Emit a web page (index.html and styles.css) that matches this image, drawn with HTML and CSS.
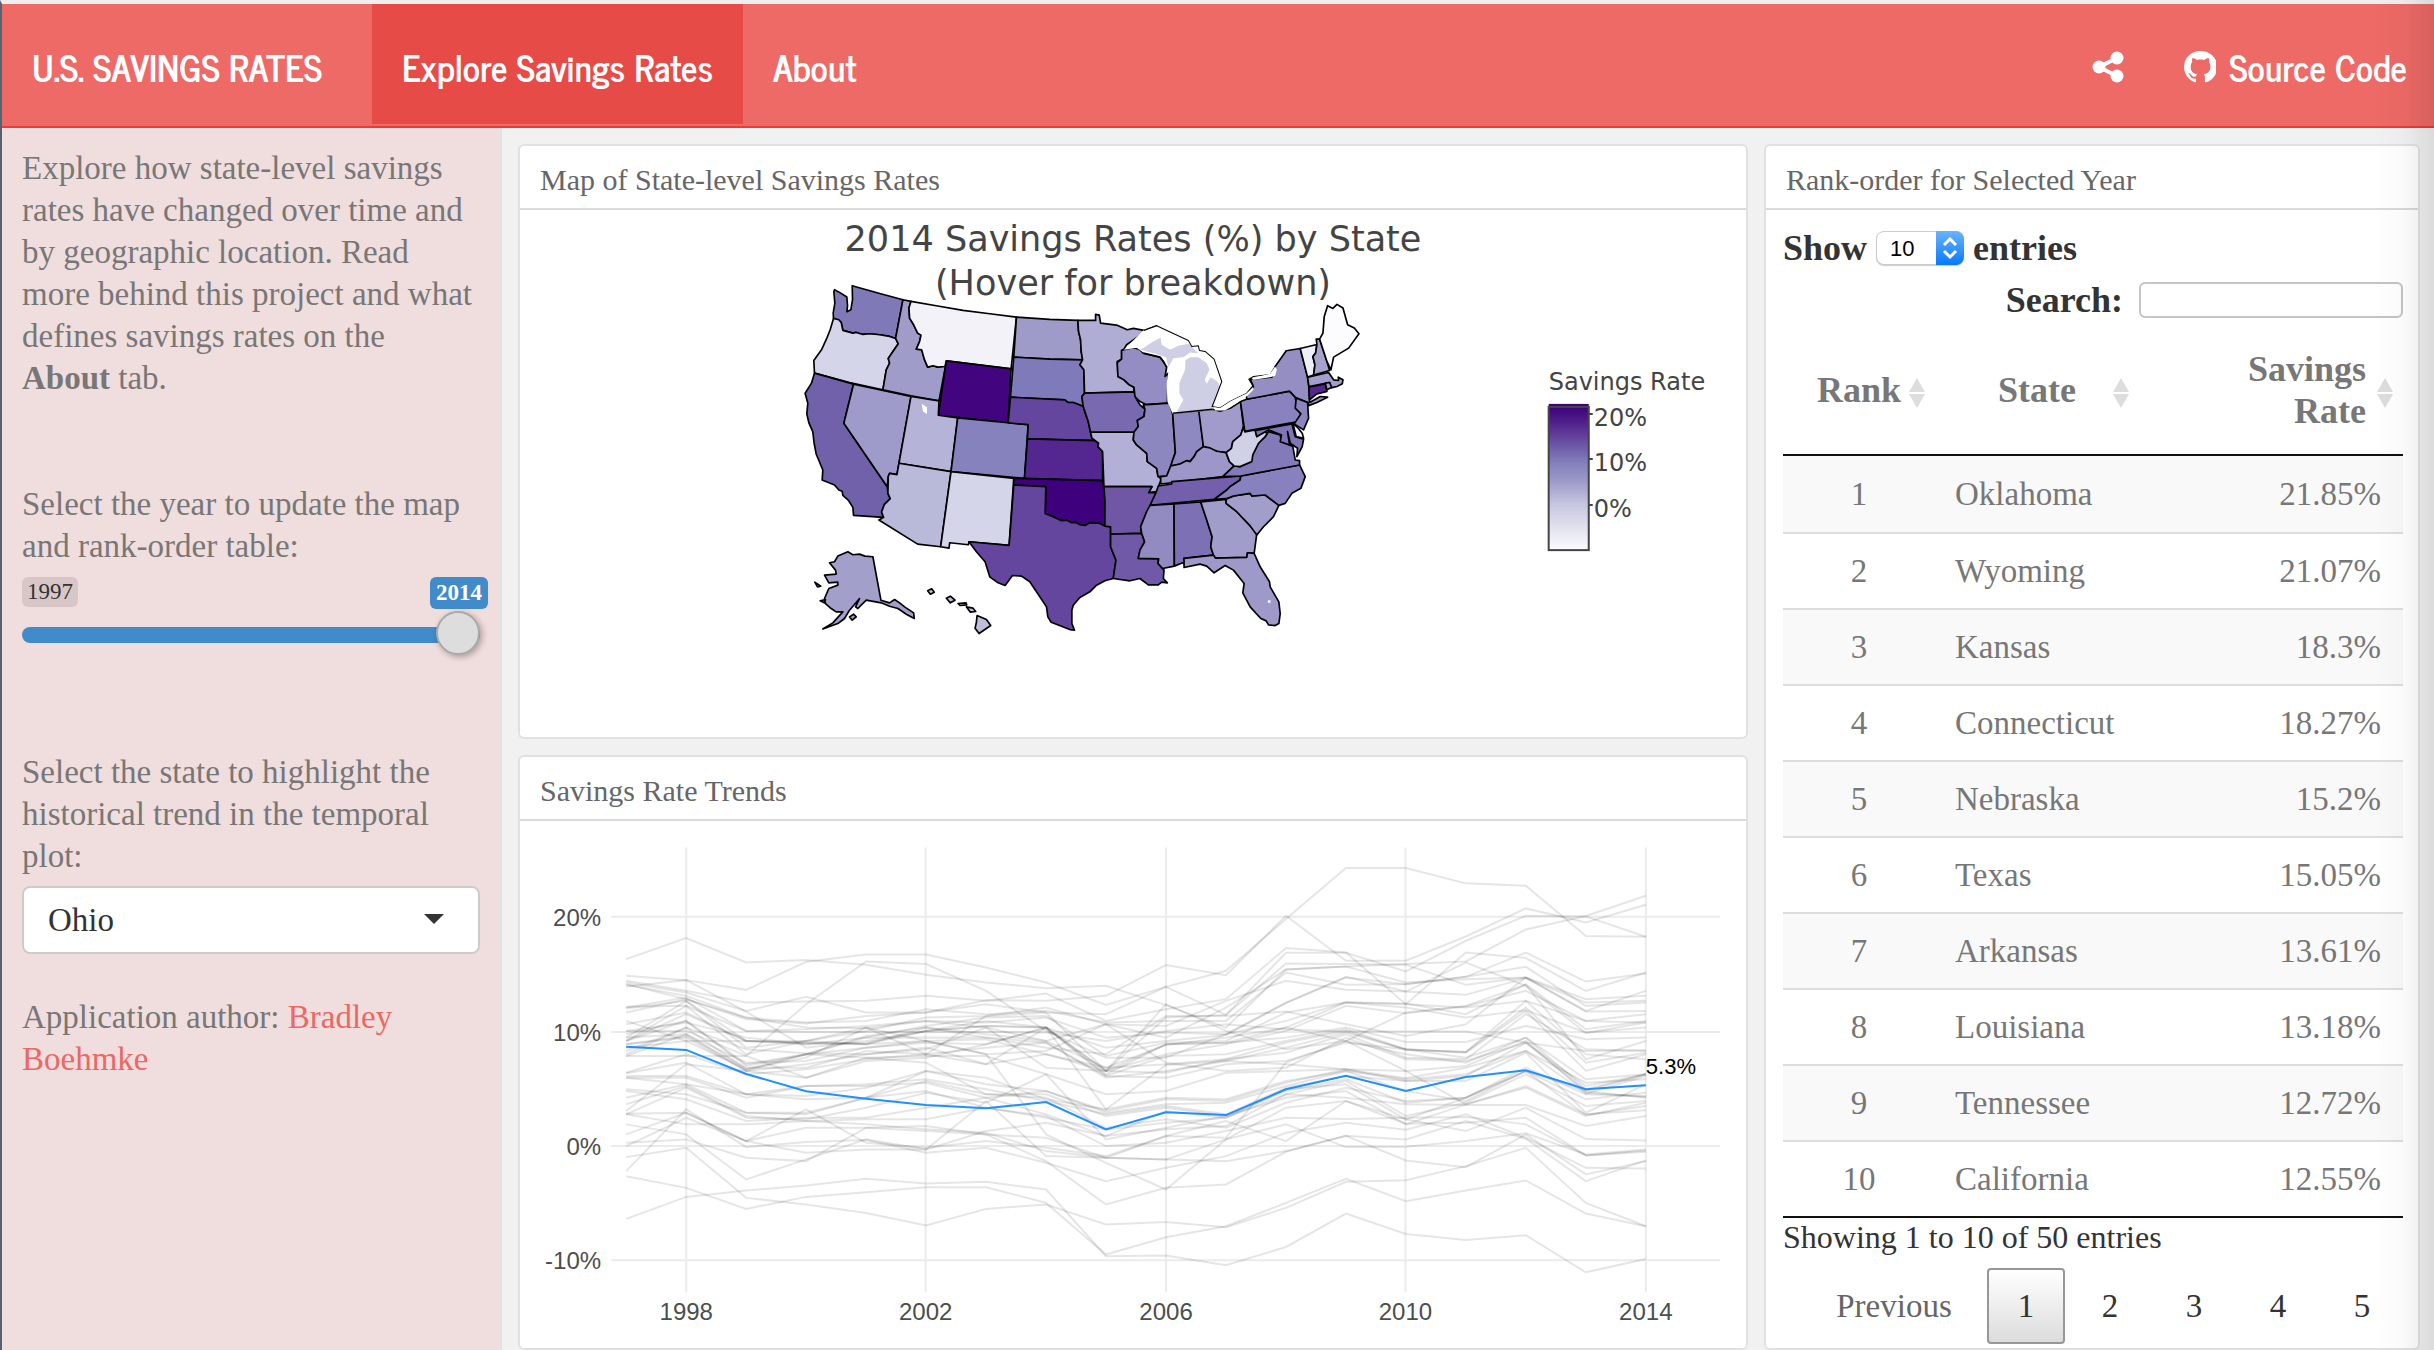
FILE: index.html
```html
<!DOCTYPE html>
<html lang="en">
<head>
<meta charset="utf-8">
<title>U.S. Savings Rates</title>
<link rel="stylesheet" href="styles.css">
</head>
<body>
<header class="navbar">
  <a class="brand" href="#">U.S. SAVINGS RATES</a>
  <nav class="tabs">
    <a class="tab active" href="#explore">Explore Savings Rates</a>
    <a class="tab" href="#about">About</a>
  </nav>
  <nav class="actions">
    <a class="action" href="#share" aria-label="Share">
      <svg class="icon" viewBox="0 0 32 32" aria-hidden="true"><path d="M25 7 7 16l18 9" fill="none" stroke="#fff" stroke-width="4"/><circle cx="25" cy="7" r="6.500"/><circle cx="7" cy="16" r="6.500"/><circle cx="25" cy="25" r="6.500"/></svg>
    </a>
    <a class="action" href="#source">
      <svg class="icon" viewBox="0 0 16 16" aria-hidden="true"><path d="M8 0C3.580 0 0 3.580 0 8c0 3.540 2.290 6.530 5.470 7.590.4.070.55-.17.55-.38v-1.490c-2.230.48-2.690-.94-2.690-.94-.36-.93-.89-1.170-.89-1.170-.73-.5.050-.49.050-.49.800.060 1.230.830 1.230.830.710 1.220 1.870.870 2.330.660.070-.51.280-.87.500-1.070-.8-.1-1.900-.4-2.500-1.200-.8-1-.9-2.900-.4-4 .1-.3.200-.5.500-.8-.2-.5-.2-1.400.1-2 .7-.1 1.700.5 2.200.9 1.200-.3 2.500-.3 3.700 0 .5-.4 1.500-1 2.200-.9.300.6.300 1.500.1 2 .9 1.100 1 2.700.4 4.100-.5 1.200-1.700 1.700-2.900 1.900.3.300.5.800.5 1.500v2.200c0 .21.150.46.550.38A8 8 0 0 0 8 0z"/></svg>
      <span>Source Code</span>
    </a>
  </nav>
</header>
<div class="dashboard">
  <aside class="sidebar">
    <p class="intro">Explore how state-level savings rates have changed over time and by geographic location. Read<br>more behind this project and what defines savings rates on the<br><strong>About</strong> tab.</p>
    <div class="field year">
      <label for="year">Select the year to update the map and rank-order table:</label>
      <div class="ticks"><span class="min">1997</span><output class="now" for="year">2014</output></div>
      <input id="year" class="slider" type="range" min="1997" max="2014" value="2014">
    </div>
    <div class="field">
      <label for="state">Select the state to highlight the historical trend in the temporal plot:</label>
      <div class="picker">
        <select id="state"><option>Ohio</option></select>
        <svg class="caret" viewBox="0 0 20 10" aria-hidden="true"><path d="M0 0h20L10 10z"/></svg>
      </div>
    </div>
    <p class="author">Application author: <a href="#author">Bradley Boehmke</a></p>
  </aside>
  <main class="main">
    <section class="card map-card">
      <h2>Map of State-level Savings Rates</h2>
      <svg class="plot" viewBox="521 211 1224 525" role="img" aria-label="2014 savings rates by state">
        <defs><linearGradient id="purples" x1="0" y1="0" x2="0" y2="1"><stop offset="0" stop-color="#3f007d"/><stop offset=".13" stop-color="#54278f"/><stop offset=".38" stop-color="#807dba"/><stop offset=".52" stop-color="#9e9ac8"/><stop offset=".68" stop-color="#c6c6e1"/><stop offset="1" stop-color="#fcfbfd"/></linearGradient></defs>
        <g class="map-title"><text x="1133" y="251">2014 Savings Rates (%) by State</text><text x="1133" y="295">(Hover for breakdown)</text></g>
        <g class="states" transform="translate(790 270) scale(.3333)">
          <path fill="#8079b8" d="M135 60L150 68 172 82 174 108 172 126 184 120 189 90 188 48 265 70 340 90 318 206 300 200 270 195 240 192 220 194 200 188 190 190 160 182 155 158 132 146 131 130 136 100 133 66z"/>
          <path fill="#d5d5e9" d="M132 146L148 150 155 158 160 182 190 190 200 188 220 194 240 192 270 195 300 200 318 206 326 222 308 248 296 266 300 280 290 300 280 360 180 338 75 310 73 272 96 240 112 205 122 180z"/>
          <path fill="#7161ab" d="M75 310L192 343 163 460 293 650 295 670 302 686 284 704 276 726 282 742 192 736 190 712 176 690 160 676 158 664 148 660 135 645 98 630 100 600 80 552 74 520 70 486 58 458 52 432 55 400 47 370 66 340z"/>
          <path fill="#9e9ac9" d="M192 343L280 362 364 380 328 580 322 614 300 610 296 620 293 650 163 460z"/>
          <path fill="#a09cca" d="M340 90L364 95 358 115 360 145 372 165 384 190 394 196 390 215 380 238 396 240 404 268 414 292 430 288 445 292 468 286 448 393 364 378 280 360 290 300 300 280 296 266 308 248 326 222 318 206z"/>
          <path fill="#f3f2f8" d="M364 95L440 108 520 122 600 132 680 142 664 297 470 273 466 290 445 292 430 288 414 292 404 268 396 240 380 238 390 215 394 196 384 190 372 165 360 145 358 115z"/>
          <path fill="#42057f" d="M470 273L664 297 655 459 446 436z"/>
          <path fill="#b5b3d7" d="M364 380L448 393 446 436 504 444 484 605 328 580z"/>
          <path fill="#8682bd" d="M504 444L715 464 704 625 484 605z"/>
          <path fill="#b9b9da" d="M328 580L484 605 453 830 384 822 268 750 282 742 276 726 284 704 302 686 295 670 296 620 300 610 322 614z"/>
          <path fill="#d5d5e9" d="M484 605L672 625 658 826 538 815 536 824 480 818 478 834 453 830z"/>
          <path fill="#9e9bc9" d="M680 142L780 149 864 152 866 185 872 210 874 245 878 270 780 268 672 262z"/>
          <path fill="#7f7aba" d="M672 262L780 268 878 270 870 285 882 300 884 370 876 380 880 410 866 404 850 398 835 398 825 390 662 382z"/>
          <path fill="#65469e" d="M662 382L825 390 835 398 850 398 866 404 880 410 886 430 895 455 902 487 906 505 915 512 713 507 715 464 655 459z"/>
          <path fill="#542790" d="M713 507L915 512 926 520 924 530 938 545 938 632 704 625z"/>
          <path fill="#3f007d" d="M672 625L938 632 945 690 945 768 930 760 900 758 885 766 870 764 858 757 845 758 830 750 815 752 790 740 766 730 768 650 672 645z"/>
          <path fill="#65469e" d="M672 645L768 650 766 730 790 740 815 752 830 750 845 758 858 757 870 764 885 766 900 758 930 760 945 768 962 770 962 792 962 830 978 870 970 925 945 932 920 945 900 965 870 982 850 1005 846 1020 846 1060 854 1080 840 1078 784 1056 774 1040 770 1010 740 965 720 935 695 918 668 916 646 946 625 938 600 920 586 875 560 845 538 815 658 826z"/>
          <path fill="#b0add5" d="M864 152L917 152 917 134 928 136 932 160 980 166 1012 180 1030 176 1062 182 1100 168 1060 190 1010 225 1002 238 995 242 995 268 982 275 984 320 1002 330 1018 345 1032 352 1032 366 884 370 882 300 870 285 878 270 874 245 872 210 866 185z"/>
          <path fill="#7869b0" d="M884 370L1032 366 1038 385 1050 405 1065 418 1062 440 1042 452 1045 470 1032 487 902 487 895 455 880 410 876 380z"/>
          <path fill="#b2b0d6" d="M902 487L1032 487 1030 510 1040 525 1070 550 1072 575 1100 595 1104 618 1114 628 1105 650 1100 665 1076 668 1086 650 942 650 938 545 924 530 926 520 906 505z"/>
          <path fill="#6f57a6" d="M942 650L1086 650 1076 668 1098 668 1085 705 1070 725 1052 770 1055 790 962 792 962 770 945 768 945 690z"/>
          <path fill="#7059a7" d="M962 792L1055 790 1064 815 1050 840 1045 865 1106 866 1104 880 1122 900 1120 925 1132 938 1115 936 1105 944 1075 944 1050 925 1020 932 970 925 978 870 962 830z"/>
          <path fill="#938dc3" d="M1002 240L1028 234 1048 238 1060 250 1110 262 1120 275 1130 292 1125 320 1135 310 1132 400 1068 404 1050 395 1035 380 1032 352 1018 345 1002 330 984 320 982 278 995 268 995 242z"/>
          <path fill="#8d87c0" d="M1060 405L1138 400 1148 432 1156 548 1148 570 1142 590 1130 618 1104 620 1100 595 1072 575 1070 550 1040 525 1030 510 1032 487 1045 470 1042 452 1062 440 1065 418z"/>
          <path fill="#8f89c1" d="M1148 430L1228 422 1240 530 1220 545 1212 560 1200 575 1190 572 1170 582 1142 588 1148 570 1156 548z"/>
          <path fill="#a09bca" d="M1226 422L1268 418 1290 424 1320 415 1351 395 1360 470 1352 495 1328 515 1324 535 1308 548 1280 544 1240 530z"/>
          <path fill="#9c97c8" d="M1112 642L1112 620 1130 618 1142 588 1170 582 1190 572 1200 575 1212 560 1220 545 1240 530 1260 534 1280 544 1308 548 1318 575 1332 588 1298 620z"/>
          <path fill="#745fac" d="M1105 648L1145 642 1145 635 1298 622 1352 618 1350 630 1320 650 1310 660 1290 675 1272 688 1080 706 1098 668z"/>
          <path fill="#918bc2" d="M1080 706L1152 702 1153 888 1118 895 1104 880 1106 866 1045 865 1050 840 1064 815 1055 790 1052 770 1070 725z"/>
          <path fill="#7d70b5" d="M1152 702L1232 696 1250 750 1266 800 1262 830 1270 855 1182 865 1190 888 1178 878 1153 888z"/>
          <path fill="#a19dcb" d="M1232 696L1308 688 1308 700 1340 725 1378 765 1400 790 1392 850 1372 848 1370 862 1276 864 1270 855 1262 830 1266 800 1250 750z"/>
          <path fill="#9d99c8" d="M1182 865L1270 855 1276 864 1370 862 1372 848 1392 850 1410 890 1438 935 1440 950 1466 995 1470 1030 1466 1060 1455 1066 1435 1064 1428 1052 1412 1045 1380 1010 1358 968 1362 940 1330 900 1305 886 1272 908 1250 888 1230 882 1182 892z"/>
          <path fill="#a29ecb" d="M1308 688L1330 678 1380 670 1385 678 1425 675 1466 706 1450 740 1420 770 1400 795 1378 765 1340 725 1308 700z"/>
          <path fill="#8781bd" d="M1352 618L1528 585 1545 620 1532 655 1505 670 1485 700 1466 706 1425 675 1385 678 1380 670 1330 678 1308 686 1272 688 1290 675 1310 660 1320 650 1350 630z"/>
          <path fill="#827ab9" d="M1298 620L1332 588 1350 590 1375 575 1388 550 1405 520 1425 500 1435 485 1470 495 1474 515 1508 530 1515 570 1528 572 1528 585 1352 618z"/>
          <path fill="#d0d0e6" d="M1360 470L1364 486 1395 480 1400 500 1420 485 1432 490 1425 500 1405 520 1388 555 1385 575 1350 590 1332 588 1318 575 1308 548 1324 535 1328 515 1352 495z"/>
          <path fill="#8982be" d="M1351 395L1370 388 1498 364 1515 382 1518 400 1532 432 1520 455 1508 458 1364 484z"/>
          <path fill="#948ec3" d="M1370 388L1368 376 1390 350 1380 328 1445 322 1455 290 1488 243 1530 236 1552 322 1556 352 1558 398 1590 380 1612 382 1580 398 1553 408 1553 398 1515 382 1498 364z"/>
          <path fill="#8b84bf" d="M1518 385L1552 398 1555 445 1540 480 1512 462 1532 432 1515 415z"/>
          <path fill="#8075b7" d="M1395 482L1505 462 1515 500 1540 508 1536 530 1520 560 1522 535 1500 520 1492 485 1498 525 1470 515 1474 495 1435 480 1400 500z"/>
          <path fill="#f3f2f8" d="M1508 460L1524 475 1536 490 1540 505 1518 500z"/>
          <path fill="#a29ecb" d="M1552 322L1615 308 1630 330 1645 332 1644 322 1658 330 1656 342 1640 350 1622 354 1618 338 1556 350z"/>
          <path fill="#54278f" d="M1556 352L1605 342 1610 365 1580 372 1558 390z"/>
          <path fill="#a29ecb" d="M1605 340L1618 338 1624 352 1610 360z"/>
          <path fill="#efeef6" d="M1530 236L1580 224 1576 250 1568 260 1574 285 1570 316 1552 322z"/>
          <path fill="#a6a2ce" d="M1580 224L1578 208 1588 208 1610 275 1618 302 1570 316 1574 285 1568 260 1576 250z"/>
          <path fill="#fcfbfe" d="M1588 208L1598 190 1602 140 1612 108 1628 116 1640 104 1658 115 1672 165 1692 175 1706 192 1675 235 1630 262 1622 300 1610 275z"/>
          <path class="plain" fill="#fff" d="M1002 240L1060 182 1100 168 1195 212 1215 230 1245 245 1272 268 1295 335 1278 380 1268 420 1148 432 1132 395 1130 340 1138 285 1128 290 1120 262 1060 248 1040 234z"/>
          <path class="plain" fill="#cecee5" d="M1052 240L1090 215 1112 204 1115 225 1140 240 1165 228 1195 222 1225 250 1200 248 1180 262 1150 265 1135 292 1128 262 1090 250zM1160 426L1180 390 1168 370 1168 340 1185 300 1186 272 1200 262 1225 262 1250 280 1258 300 1244 330 1250 342 1262 322 1282 335 1290 350 1278 385 1268 418z"/>
          <path class="thin" d="M1062 182L1100 168 1195 212 1205 230 1225 228 1228 242 1245 245 1272 268 1295 335 1278 380 1266 410 1290 414 1320 395 1370 370 1388 348 1376 328 1390 320 1440 314 1455 290"/>
          <path class="plain" fill="#fff" d="M1270 412L1290 414 1320 395 1370 370 1388 352 1390 360 1372 378 1340 400 1305 422 1275 422zM1384 326L1395 322 1440 312 1455 290 1460 300 1455 318 1440 322 1390 330zM396 402L412 412 412 432 400 425zM1433 990h8v8h-8z"/>
          <path d="M1060 250L1110 262 1120 275 1130 292M1148 430L1268 418"/>
          <path fill="#a29fcb" d="M175 845L190 854 210 852 226 858 250 860 262 925 274 990 300 998 315 988 330 998 345 1010 372 1028 374 1045 350 1032 325 1015 300 1008 275 998 230 990 205 1015 198 1010 210 985 180 1020 165 1045 145 1060 100 1076 130 1058 160 1025 140 1025 125 1015 108 1000 105 985 118 955 145 945 145 936 118 938 105 915 140 912 138 900 120 878 135 875 145 858zM180 1040l12-8 8 8-12 10zM76 936l18 12-10 2zM92 992l16-4-4 10z"/>
          <path fill="#bdbddc" d="M414 962l12-6 8 10-12 6zM470 984l12-6 14 12-14 8zM505 1000l24-2 2 6-20 2zM530 1010l20 4 8 10-16 2zM562 1036L590 1048 603 1066 568 1090 556 1074 560 1056z"/>
        </g>
        <g class="legend">
          <text x="1548" y="390">Savings Rate</text>
          <rect x="1548" y="404" width="40" height="3" fill="#3f007d"/>
          <rect x="1548" y="407" width="40" height="143" fill="url(#purples)" stroke="#444" stroke-width="2"/>
          <path d="M1588 414h4M1588 459h4M1588 505h4" stroke="#444" stroke-width="2"/>
          <text x="1593" y="426">20%</text><text x="1593" y="471">10%</text><text x="1593" y="517">0%</text>
        </g>
      </svg>
    </section>
    <section class="card trend-card">
      <h2>Savings Rate Trends</h2>
      <svg class="plot" viewBox="521 821 1224 525" role="img" aria-label="Savings rate trends, 1997 to 2014">
        <path class="grid" d="M612 916h1107M612 1031h1107M612 1145h1107M612 1259h1107M687 847v444M926 847v444M1166 847v444M1405 847v444M1645 847v444"/>
        <g id="series"></g>
        <g class="axis-y"><text x="602" y="925">20%</text><text x="602" y="1040">10%</text><text x="602" y="1154">0%</text><text x="602" y="1268">-10%</text></g>
        <g class="axis-x"><text x="687" y="1319">1998</text><text x="926" y="1319">2002</text><text x="1166" y="1319">2006</text><text x="1405" y="1319">2010</text><text x="1645" y="1319">2014</text></g>
        <text class="callout" x="1645" y="1073">5.3%</text>
      </svg>
    </section>
    <section class="card rank-card">
      <h2>Rank-order for Selected Year</h2>
      <div class="rank-body">
        <div class="length">
          <label for="length">Show</label>
          <span class="mini"><select id="length"><option>10</option></select><svg viewBox="0 0 28 34" aria-hidden="true"><path d="M8 14l6-6 6 6M8 20l6 6 6-6"/></svg></span>
          <label for="length">entries</label>
        </div>
        <div class="search"><label for="search">Search:</label><input id="search" type="search"></div>
        <table>
          <colgroup><col class="c-rank"><col class="c-state"><col class="c-rate"></colgroup>
          <thead><tr>
            <th>Rank<svg class="sort" viewBox="0 0 16 30" aria-hidden="true"><path d="M8 0l8 14H0zM8 30l8-14H0z"/></svg></th>
            <th>State<svg class="sort" viewBox="0 0 16 30" aria-hidden="true"><path d="M8 0l8 14H0zM8 30l8-14H0z"/></svg></th>
            <th>Savings Rate<svg class="sort" viewBox="0 0 16 30" aria-hidden="true"><path d="M8 0l8 14H0zM8 30l8-14H0z"/></svg></th>
          </tr></thead>
          <tbody>
            <tr><td>1</td><td>Oklahoma</td><td>21.85%</td></tr>
            <tr><td>2</td><td>Wyoming</td><td>21.07%</td></tr>
            <tr><td>3</td><td>Kansas</td><td>18.3%</td></tr>
            <tr><td>4</td><td>Connecticut</td><td>18.27%</td></tr>
            <tr><td>5</td><td>Nebraska</td><td>15.2%</td></tr>
            <tr><td>6</td><td>Texas</td><td>15.05%</td></tr>
            <tr><td>7</td><td>Arkansas</td><td>13.61%</td></tr>
            <tr><td>8</td><td>Louisiana</td><td>13.18%</td></tr>
            <tr><td>9</td><td>Tennessee</td><td>12.72%</td></tr>
            <tr><td>10</td><td>California</td><td>12.55%</td></tr>
          </tbody>
        </table>
        <p class="info">Showing 1 to 10 of 50 entries</p>
        <div class="pages">
          <button class="prev" type="button" disabled>Previous</button><button class="current" type="button">1</button><button type="button">2</button><button type="button">3</button><button type="button">4</button><button type="button">5</button>
        </div>
      </div>
    </section>
  </main>
</div>
<div class="edge-shade"></div>
<script src="script.js"></script>
</body>
</html>
```
FILE: styles.css
```css
* { box-sizing: border-box; }
body {
  margin: 0;
  min-height: 100vh;
  display: flex;
  flex-direction: column;
  border-top: 4px solid #efefef;
  border-left: 2px solid #56636f;
  background: #f1f1f1;
  color: #777;
  font: 33px/42px Georgia, "Liberation Serif", serif;
}
h2, p { margin: 0; font-weight: normal; }
a { color: #eb6864; text-decoration: none; }

.navbar {
  display: flex;
  height: 124px;
  flex: none;
  border-bottom: 2px solid #e83c37;
  box-shadow: 0 -1px 0 #b0a8a8;
  background: #ed6a66;
  font: bold 36px/42px "News Cycle", "Liberation Sans Narrow", "Roboto Condensed", "Open Sans Condensed", "DejaVu Sans Condensed", sans-serif;
}
.navbar a { display: flex; align-items: center; height: 120px; padding: 6px 30px 0; color: #fff; white-space: nowrap; }
.navbar .brand { width: 370px; }
.tabs, .actions { display: flex; }
.navbar .active { background: #e74b47; }
.actions { margin-left: auto; }
.navbar .actions a { gap: 13px; }
.navbar .actions a:last-child { padding-right: 27px; }
.icon { width: 32px; height: 32px; fill: #fff; }

.dashboard { display: flex; flex: 1; }
.sidebar { width: 500px; flex: none; padding: 19px 20px; background: #f0dddd; border-right: 2px solid #e0e2e2; }
.intro { margin-bottom: 84px; }
.field label { display: block; }
.year { margin-bottom: 94px; }
.ticks { display: flex; justify-content: space-between; align-items: flex-start; margin: 10px -8px 0 0; height: 36px; font-size: 23px; line-height: 30px; }
.min { padding: 0 5px; border-radius: 6px; background: #d9c7c7; color: #333; }
.now { padding: 1px 6px; border-radius: 6px; background: #428bca; color: #fff; font-weight: bold; }
.slider { display: block; width: 100%; height: 44px; margin: 0; appearance: none; background: none; }
.slider::-webkit-slider-runnable-track { height: 16px; border-radius: 8px; background: #428bca; }
.slider::-webkit-slider-thumb { appearance: none; width: 44px; height: 44px; margin-top: -16px; border: 2px solid #aaa; border-radius: 50%; background: #ddd; box-shadow: 2px 2px 6px rgba(0, 0, 0, .3); }
.picker { position: relative; margin-top: 9px; }
.picker select { width: 100%; height: 68px; padding: 0 24px; appearance: none; border: 2px solid #ccc; border-radius: 8px; background: #fff; color: #333; font: inherit; }
.caret { position: absolute; right: 36px; top: 28px; width: 20px; height: 10px; fill: #333; }
.author { margin-top: 42px; }

.main {
  flex: 1;
  display: grid;
  grid-template-columns: minmax(0, 1230fr) minmax(0, 656fr);
  grid-template-rows: minmax(0, 594fr) minmax(0, 594fr);
  gap: 16px;
  padding: 16px 14px 2px 16px;
}
.card { display: flex; flex-direction: column; border: 2px solid #e1e1e1; border-radius: 6px; background: #fff; overflow: hidden; }
.card h2 { height: 64px; flex: none; padding: 13px 20px; border-bottom: 2px solid #d9d9d9; color: #666; font-size: 30px; line-height: 42px; }
.plot { display: block; width: 100%; height: 0; flex: 1; }
.rank-card { grid-column: 2; grid-row: 1 / 3; }

.map-title { fill: #444; font: 35px Verdana, "DejaVu Sans", sans-serif; text-anchor: middle; }
.legend { fill: #444; font: 24px Verdana, "DejaVu Sans", sans-serif; }
.states path { stroke: #000; stroke-width: 5; stroke-linejoin: round; }
.states path:not([fill]) { fill: none; }
.states .plain { stroke: none; }
.states .thin { stroke-width: 3; }
.grid { fill: none; stroke: #ebebeb; stroke-width: 2; }
#series polyline { fill: none; stroke: #000; stroke-opacity: .1; stroke-width: 2; }
#series .picked { stroke: #1e90ff; stroke-opacity: 1; }
.axis-x, .axis-y { fill: #4d4d4d; font: 24px Helvetica, "Liberation Sans", sans-serif; }
.axis-x { text-anchor: middle; }
.axis-y { text-anchor: end; }
.callout { fill: #000; font: 22px Helvetica, "Liberation Sans", sans-serif; }

.rank-body { padding: 17px 15px 4px 17px; color: #333; }
.length, .search { display: flex; align-items: center; height: 42px; font-size: 36px; font-weight: bold; }
.length { gap: 9px; }
.search { justify-content: flex-end; gap: 16px; margin-top: 10px; }
.mini { position: relative; display: flex; }
.mini select { width: 88px; height: 34px; padding: 0 13px; appearance: none; border: 1px solid #ccc; border-radius: 8px; background: #fff; box-shadow: 0 1px 1px rgba(0, 0, 0, .2); color: #000; font: 22px "Liberation Sans", sans-serif; }
.mini svg { position: absolute; right: 0; top: 0; width: 28px; height: 34px; border-radius: 0 8px 8px 0; background: linear-gradient(#6cb3fa, #067aff); fill: none; stroke: #fff; stroke-width: 3; }
.search input { width: 264px; height: 36px; border: 2px solid #c4c4c4; border-radius: 6px; background: #fff; }
table { width: 100%; margin-top: 5px; border-collapse: separate; border-spacing: 0; table-layout: fixed; border-bottom: 2px solid #111; color: #777; }
.c-rank { width: 152px; }
.c-state { width: 204px; }
th { position: relative; height: 130px; padding: 0; border-bottom: 2px solid #111; font-size: 36px; }
th:last-child { padding: 0 37px 0 90px; text-align: right; }
.sort { position: absolute; right: 10px; top: 52px; width: 16px; height: 30px; fill: #ddd; }
td { height: 76px; padding: 0 22px 0 20px; border-top: 2px solid #ddd; }
tr:first-child td { border-top: 0; }
tbody tr:nth-child(odd) { background: #f9f9f9; }
td:first-child { padding: 0; text-align: center; }
td:last-child { text-align: right; }
.info { font-size: 32px; line-height: 38px; }
.pages { display: flex; justify-content: flex-end; gap: 6px; margin: 12px 2px 0 0; }
.pages button { width: 78px; height: 76px; padding: 0; border: 2px solid transparent; border-radius: 4px; background: none; color: #333; font: inherit; }
.pages .prev { width: 174px; color: #666; }
.pages .current { border-color: #979797; background: linear-gradient(#fff, #dcdcdc); }

.edge-shade { position: fixed; top: 0; right: 0; bottom: 0; width: 60px; background: linear-gradient(to right, rgba(0, 0, 0, 0), rgba(0, 0, 0, .02) 50%, rgba(0, 0, 0, .09)); pointer-events: none; }
```
FILE: script.js
```js
// One row per state, 1997 to 2014. Each value is a height on the plot,
// three units per pixel, measured down from the top of the panel.
const rows = `
355 292 365 358 372 402 425 442 435 493 560 386 377 370 362 266 226 165
405 418 447 363 341 341 380 425 492 438 390 235 82 82 128 135 286 288
437 418 512 620 600 570 555 560 690 530 522 336 336 392 300 225 227 288
420 450 485 482 480 465 480 458 540 505 475 322 335 490 335 352 450 395
425 455 510 468 515 515 478 480 465 373 403 225 360 360 287 203 245 192
432 465 530 545 540 505 520 510 545 540 540 395 432 430 408 335 422 398
430 475 535 548 525 515 490 515 520 438 522 368 370 372 432 410 510 450
500 470 570 565 555 540 560 600 550 555 480 420 447 452 365 435 576 545
503 480 600 600 570 530 525 500 550 590 500 386 377 425 415 410 475 465
498 495 570 573 573 573 573 575 600 570 550 566 572 572 572 605 630 628
515 475 530 560 562 540 545 530 590 575 580 485 408 452 462 412 485 480
540 600 600 610 605 570 540 560 620 600 582 487 410 430 408 378 495 485
550 515 600 605 610 560 590 620 640 525 525 512 550 585 550 410 512 510
570 570 645 490 362 370 450 570 650 650 580 540 484 488 520 430 565 540
570 545 590 610 590 555 530 525 645 605 600 515 485 500 530 508 575 560
580 540 670 640 585 560 580 600 680 612 590 560 485 490 500 480 540 520
590 480 620 600 610 570 555 560 690 640 610 570 495 517 497 450 540 545
600 495 640 600 560 640 525 515 690 490 570 625 600 515 495 432 655 600
590 580 665 660 620 605 610 560 700 610 605 590 560 603 603 555 595 590
600 540 675 640 590 590 590 605 705 645 640 600 565 625 633 480 640 655
610 590 690 670 640 620 670 640 680 670 655 605 570 627 633 500 665 635
610 585 680 680 630 640 620 605 710 690 660 620 575 625 635 510 690 640
620 600 685 640 620 600 595 640 690 695 655 635 580 650 655 520 625 630
600 520 600 605 610 600 640 630 550 665 690 680 590 655 660 605 750 700
645 580 690 710 660 650 610 560 705 710 670 660 605 625 650 590 745 700
630 560 625 637 640 625 560 680 690 610 605 560 600 640 665 590 715 700
645 645 645 710 650 645 645 700 760 750 695 690 685 712 680 630 758 705
695 640 700 685 655 640 670 560 805 672 660 670 685 690 675 600 755 768
697 665 760 765 740 690 710 775 805 770 775 720 690 715 700 630 725 715
705 705 760 775 770 690 730 750 810 775 780 725 685 720 720 635 815 730
710 730 760 735 735 725 770 750 815 790 785 735 690 750 780 690 750 770
710 710 770 735 730 715 745 780 820 795 820 740 705 720 705 605 735 700
745 760 815 820 770 720 760 760 825 800 825 750 715 785 770 690 775 755
750 775 840 830 830 800 770 820 885 810 830 760 720 825 785 700 795 780
770 730 815 815 770 750 800 830 865 845 830 745 730 835 770 690 822 795
790 735 825 840 835 835 800 825 915 905 870 830 834 830 828 850 943 928
810 670 690 640 650 665 760 770 860 835 860 785 740 780 770 680 760 765
820 740 830 835 800 755 785 700 895 860 825 770 750 850 790 735 820 808
820 850 850 840 850 865 875 930 950 955 960 930 884 958 978 880 1000 960
818 815 900 935 925 925 870 845 885 865 855 760 770 790 792 792 855 825
850 880 1015 955 895 925 780 945 950 955 895 800 780 848 845 830 943 932
915 830 900 805 905 920 900 920 945 885 890 665 600 690 790 740 825 785
905 895 950 960 860 855 880 890 950 885 840 900 780 835 870 800 894 898
990 805 918 903 897 935 920 965 1020 980 945 875 845 866 820 890 980 982
880 815 900 860 860 870 880 960 1090 1040 1030 932 884 895 840 893 1020 958
640 560 685 650 560 600 640 880 965 1045 895 850 918 917 900 877 940 925
948 920 1070 1090 1115 1153 1103 1090 1150 1142 1158 1100 1022 1017 975 920 1085 1155
1005 1040 1103 1067 1053 1038 1038 1085 1240 1188 1155 1085 1013 1080 1048 1018 1117 1155
1133 1067 1048 1033 1013 1027 1022 1045 1245 1243 1272 1217 1117 1178 1196 1182 1293 1253
617 627 699 751 773 792 802 783 865 814 822 745 704 750 708 688 745 733
`.trim().split("\n");

const series = document.getElementById("series");
rows.forEach((row, i) => {
  const line = document.createElementNS("http://www.w3.org/2000/svg", "polyline");
  const points = row.split(" ").map((v, k) => (627 + k * 59.88).toFixed(1) + "," + (840 + v / 3).toFixed(1));
  line.setAttribute("points", points.join(" "));
  if (i === rows.length - 1) line.setAttribute("class", "picked");
  series.appendChild(line);
});
```
